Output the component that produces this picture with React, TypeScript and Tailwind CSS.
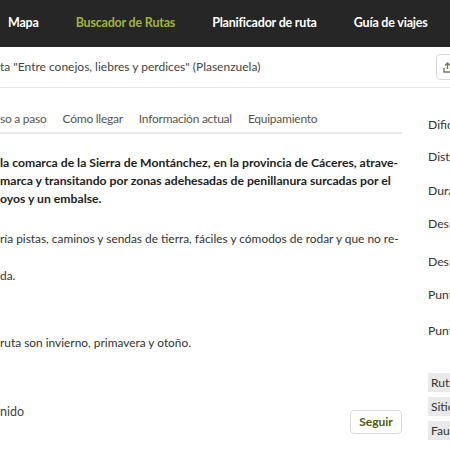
import React from "react"

const navItems = [
  { label: "Mapa", active: false },
  { label: "Buscador de Rutas", active: true },
  { label: "Planificador de ruta", active: false },
  { label: "Guía de viajes", active: false },
]

const tabs = ["so a paso", "Cómo llegar", "Información actual", "Equipamiento"]

// sidebar labels, cut by the window edge
const facts = [
  { label: "Dificultad", mt: "mt-[28px]" },
  { label: "Distancia", mt: "mt-[14px]" },
  { label: "Duración", mt: "mt-[16px]" },
  { label: "Desnivel positivo", mt: "mt-[15px]" },
  { label: "Desnivel negativo", mt: "mt-[20px]" },
  { label: "Punto más alto", mt: "mt-[15px]" },
  { label: "Punto más bajo", mt: "mt-[18px]" },
]

const tags = ["Rutas", "Sitios", "Fauna"]

export default function App() {
  return (
    <div className="w-[450px] h-[450px] overflow-hidden bg-white font-['Lato',sans-serif] text-[#333]">
      {/* Top nav */}
      <nav className="h-[47px] bg-[#262626] flex items-center pl-[8px] gap-[37px] whitespace-nowrap">
        {navItems.map((item) => (
          <span
            key={item.label}
            className={
              item.active
                ? "text-[12.5px] font-bold tracking-[-0.2px] text-[#a2b23f]"
                : "text-[12.5px] font-bold tracking-[-0.2px] text-white"
            }
          >
            {item.label}
          </span>
        ))}
      </nav>

      {/* Breadcrumb */}
      <div className="h-[41px] border-b border-[#e6e6e6] flex items-center justify-between whitespace-nowrap">
        <span className="text-[12px] text-[#444]">ta "Entre conejos, liebres y perdices" (Plasenzuela)</span>
        <div className="w-[40px] h-[26px] -mr-[26px] border border-[#d8d8d8] rounded-[4px] flex items-center pl-[6px]">
          <svg width="9" height="11" viewBox="0 0 9 11" fill="none" stroke="#7a7a5a" strokeWidth="1.4">
            <path d="M4.5 1v6M2 3.5 4.5 1 7 3.5M1 6v4h7V6" />
          </svg>
        </div>
      </div>

      <div className="flex">
        {/* Main column */}
        <div className="w-[402px] shrink-0 whitespace-nowrap">
          <div className="h-[46px] border-b-2 border-[#e8e8e8] flex items-end pb-[4px] gap-[16px] text-[12px] tracking-[-0.25px] text-[#555]">
            {tabs.map((t) => (
              <span key={t}>{t}</span>
            ))}
          </div>

          <div className="mt-[20px] text-[12.2px] font-bold leading-[18px] text-[#222]">
            <div>la comarca de la Sierra de Montánchez, en la provincia de Cáceres, atrave-</div>
            <div>marca y transitando por zonas adehesadas de penillanura surcadas por el</div>
            <div>oyos y un embalse.</div>
          </div>

          <div className="mt-[22px] text-[11.9px] leading-[18.5px] text-[#333]">
            <div>ría pistas, caminos y sendas de tierra, fáciles y cómodos de rodar y que no re-</div>
            <div>&nbsp;</div>
            <div>da.</div>
          </div>

          <div className="mt-[48px] text-[11.9px] leading-[18px] text-[#333]">
            ruta son invierno, primavera y otoño.
          </div>

          <div className="mt-[40px] flex items-center justify-between">
            <span className="text-[12.5px] text-[#444]">nido</span>
            <button className="w-[52px] h-[24px] border border-[#dcdcdc] rounded-[4px] text-[12px] font-bold text-[#4e5a12] mt-[18px]">
              Seguir
            </button>
          </div>
        </div>

        {/* Sidebar */}
        <div className="ml-[26px] whitespace-nowrap text-[12.2px] text-[#333]">
          {facts.map((f) => (
            <div key={f.label} className={`${f.mt} leading-[18px]`}>
              {f.label}
            </div>
          ))}
          <div className="mt-[33px] flex flex-col gap-[5px]">
            {tags.map((t) => (
              <span key={t} className="h-[19px] bg-[#e9e9e9] pl-[3px] pr-[10px] leading-[19px] text-[12px] w-fit">
                {t}
              </span>
            ))}
          </div>
        </div>
      </div>
    </div>
  )
}
